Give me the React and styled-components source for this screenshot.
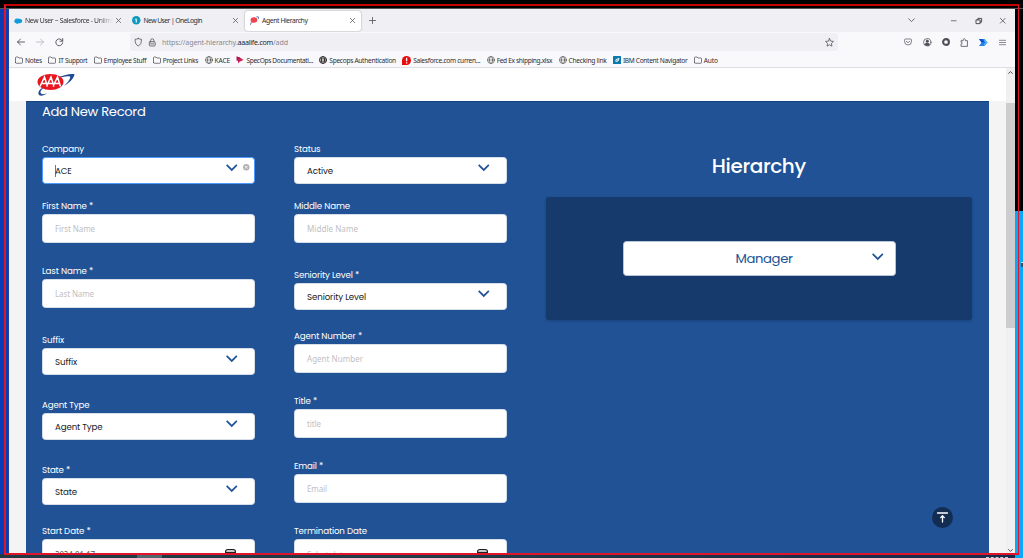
import React, { useLayoutEffect, useRef, useState } from "react";
import styled, { createGlobalStyle } from "styled-components";

const Global = createGlobalStyle`
  * { box-sizing: border-box; }
  body { margin: 0; background: #000; overflow: hidden; }
  svg { display: block; flex: none; overflow: visible; }
`;

const ui = `"Segoe UI", "Noto Sans", "Open Sans", sans-serif`;
const brand = `Poppins, Inter, "Liberation Sans", sans-serif`;

/* ---------- text that spreads its letters over a given measure ---------- */
const Measure = styled.span`
  display: block;
  flex: none;
  width: ${(p) => p.$w}px;
  white-space: pre;
`;
function Text({ w, children }) {
  const ref = useRef(null);
  const [spacing, setSpacing] = useState(0);
  useLayoutEffect(() => {
    const natural = ref.current.getBoundingClientRect().width;
    setSpacing((w - natural) / String(children).length);
  }, [w, children]);
  return (
    <Measure $w={w}>
      <span ref={ref} style={{ letterSpacing: `${spacing}px` }}>{children}</span>
    </Measure>
  );
}

/* ---------- desktop ---------- */
const Desktop = styled.div`
  position: relative;
  width: 1023px;
  height: 558px;
  overflow: hidden;
  background: #000;
  display: grid;
  grid-template-columns: 9px 1006px 8px;
  grid-template-rows: 9px 545px 4px;
`;
const TopEdge = styled.div`grid-column: 1 / -1; background: #000; border-bottom: 1px solid #555;`;
const LeftEdge = styled.div`background: #0a3db5; border-right: 1px solid #17429f;`;
const RightEdge = styled.div`
  display: flex;
  flex-direction: column;
  grid-row: 2 / 4;
  grid-column: 3;
  justify-content: flex-end;
`;
const Neighbour = styled.div`height: 347px; background: #05a8fb; display: flex; justify-content: flex-end; padding-top: 51px;`;
const PointerTip = styled.div`width: 2px; height: 5px; background: #484848; border-top: 1px solid #ddd;`;
const Taskbar = styled.div`
  grid-column: 1 / 3;
  grid-row: 3;
  display: flex;
  justify-content: space-between;
  background: linear-gradient(90deg, #213943, #203b47 45%, #1a2c49 85%);
  padding: 0 7px 0 137px;
`;
const ActiveApp = styled.div`width: 25px; background: #53656d;`;
const Clock = styled.div`width: 22px; height: 2px; margin-top: 3px; border-top: 1px dashed #cbd2da;`;
const ShareFrame = styled.div`
  position: absolute;
  left: 4px; top: 4px;
  width: 1015px; height: 551px;
  border: solid #e0152c;
  border-width: 1px 1.5px 2px 2px;
  border-top: 2px solid #c40000;
  pointer-events: none;
`;

/* ---------- browser chrome ---------- */
const Window = styled.div`
  display: flex;
  flex-direction: column;
  background: #fff;
  overflow: hidden;
  font-family: ${ui};
  font-size: 6.8px;
  color: #2c2c35;
`;
const TabBar = styled.div`
  height: 23px;
  flex: none;
  background: #f0f0f4;
  display: flex;
  align-items: center;
`;
const Tab = styled.div`
  width: ${(p) => p.$w}px;
  height: 20px;
  padding: 0 ${(p) => p.$pr}px 0 5px;
  display: flex;
  align-items: center;
  gap: 3px;
  border-radius: 3px;
  background: ${(p) => (p.$active ? "#fff" : "transparent")};
  box-shadow: ${(p) => (p.$active ? "0 0 2px #999" : "none")};
  svg:last-child { margin-left: auto; }
`;
const TabTitle = styled.div`
  ${(p) => p.$fade && "mask-image: linear-gradient(90deg, #000 82%, transparent);"}
`;
const PlusWrap = styled.div`margin-left: 8px; margin-right: auto;`;
const WindowButtons = styled.div`display: flex; align-items: center;`;
const Slot = styled.div`width: ${(p) => p.$w}px; display: flex; justify-content: center;`;
const NavBar = styled.div`
  height: 20px;
  flex: none;
  background: #f9f9fb;
  display: flex;
  align-items: center;
  padding: 0 3px 0 2.5px;
`;
const Address = styled.div`
  width: 708px;
  height: 18px;
  margin-left: 61px;
  margin-right: 61px;
  padding: 0 4px;
  border-radius: 3px;
  background: #f0f0f4;
  display: flex;
  align-items: center;
  color: #898993;
  b { font-weight: 400; color: #25252d; }
  > svg:last-child { margin-left: auto; }
`;
const Url = styled.div`display: flex; margin-left: 0.5px; font-size: 7.1px;`;
const Bookmarks = styled.div`
  height: 16px;
  flex: none;
  background: #f9f9fb;
  border-bottom: 1px solid #dfdfe3;
  display: flex;
  align-items: center;
  padding: 1px 0 0 6px;
  font-size: 6.6px;
`;
const Bookmark = styled.div`
  display: flex;
  align-items: center;
  gap: 2px;
  margin-right: 6.4px;
`;

/* ---------- page ---------- */
const Viewport = styled.div`flex: 1; min-height: 0; display: flex; background: #f4f4f4;`;
const Page = styled.div`width: 997px; display: flex; flex-direction: column;`;
const SiteHeader = styled.header`
  height: 33px;
  flex: none;
  background: #fff;
  padding: 4px 0 0 28px;
`;
const Panel = styled.main`
  flex: 1;
  min-height: 0;
  overflow: hidden;
  margin: 0 17px;
  border-top: 1px solid #164280;
  background: #205295;
  display: flex;
  gap: 37.5px;
  padding-left: 16px;
  font-family: ${brand};
  color: #fff;
`;
const FormSide = styled.form`width: 466px; flex: none;`;
const Heading = styled.h1`
  margin: 0;
  height: 39px;
  line-height: 20px;
  font-weight: 400;
  font-size: 13.1px;
`;
const Columns = styled.div`display: flex; gap: 39px;`;
const Column = styled.div`width: 213px;`;
const Field = styled.div`margin-bottom: ${(p) => p.$gap}px;`;
const Label = styled.label`display: block; height: 16px; line-height: 17px; font-size: 8.7px;`;
const Control = styled.div`
  height: ${(p) => (p.$select ? 27 : 29)}px;
  border-radius: 3.5px;
  background: #fff;
  border: 1px solid ${(p) => (p.$focus ? "#4d9aff" : "#d6deea")};
  display: flex;
  align-items: center;
  padding: ${(p) => (p.$select || p.$date ? "1px 17px 0 12px" : "0 17px 1px 12px")};
  font-size: ${(p) => (p.$select ? 8.7 : 8)}px;
  font-family: ${(p) => (p.$select ? brand : `"Noto Sans", "Open Sans", sans-serif`)};
  color: ${(p) => (p.$select ? "#222" : p.$filled ? "#555" : "#bfc0c2")};
`;
const Caret = styled.span`width: 1px; height: 12px; margin-right: -1px; background: #777;`;
const Trailing = styled.div`
  margin-left: auto;
  padding-bottom: ${(p) => p.$lift ?? 7}px;
  display: flex;
  align-items: center;
  gap: 6px;
  margin-right: ${(p) => (p.$clear ? -12.5 : 0)}px;
`;
const DateIcon = styled.div`margin-left: auto; margin-right: 1px;`;
const HierarchySide = styled.section`width: 426.5px; padding-top: 50px;`;
const Title = styled.h2`
  margin: 0 0 16px;
  height: 29px;
  line-height: 29px;
  font-size: 20px;
  font-weight: 500;
  display: flex;
  justify-content: center;
`;
const Card = styled.div`
  height: 123px;
  border-radius: 3px;
  background: #153a6b;
  box-shadow: 0 1px 3px #153a6b99;
  padding: 44px 76px 0 77.5px;
`;
const Manager = styled.div`
  height: 35px;
  border-radius: 3.5px;
  background: #fff;
  border: 1px solid #b9c5d6;
  color: #205295;
  font-size: 13.2px;
  display: flex;
  align-items: center;
  padding: 0 12px 0 111.5px;
`;
const ToTop = styled.button`
  position: absolute;
  left: 932px; top: 507px;
  width: 21px; height: 21px;
  border: 0; padding: 0;
  border-radius: 50%;
  background: #132d52;
  display: grid;
  place-items: center;
`;
const Scrollbar = styled.div`
  width: 9px;
  background: #f0f0f0;
  display: flex;
  flex-direction: column;
  align-items: center;
  justify-content: space-between;
  padding: 2px 0 1px;
`;
const Thumb = styled.div`width: 9px; height: 225px; background: #cdcdcd; margin: 28px 0 auto;`;

/* ---------- icons ---------- */
const Svg = ({ w = 8, h = w, box = "0 0 16 16", sw = 1.4, c = "#4f4f59", children }) => (
  <svg width={w} height={h} viewBox={box} fill="none" stroke={c} strokeWidth={sw} strokeLinecap="round" strokeLinejoin="round">{children}</svg>
);
const Close = ({ s = 5 }) => <Svg w={s} sw={2.3}><path d="M1 1 15 15M15 1 1 15" /></Svg>;
const Folder = () => <Svg sw={1.5}><path d="M1 13V3.500Q1 2 2.500 2H6l2 2h5.500Q15 4 15 5.500V13q0 1.500-1.500 1.500h-11Q1 14.500 1 13Z" /></Svg>;
const Globe = ({ dark }) => (
  <Svg w={8} sw={dark ? 1.7 : 1.4} c={dark ? "#222" : "#555"}><circle cx="8" cy="8" r="7" /><ellipse cx="8" cy="8" rx="3.2" ry="7" /><path d={dark ? "M1 8h14M2 4.600h12M2 11.400h12" : "M1 8h14"} strokeWidth={1.2} /></Svg>
);
const Specops = () => <Svg c="none"><path d="M1 1 8 3 15 8 8 11 4 15 4 10 1 9Z" fill="#cf2458" /><path d="M1 1 8 3 4 10Z" fill="#a31854" /></Svg>;
const Alert = () => <Svg w={9} c="none"><path d="M0 16V8a8 8 0 1 1 8 8Z" fill="#e80c0c" /><path d="M7 3h2.400v6.500H7zM7 11h2.400v2.400H7z" fill="#fff" /></Svg>;
const Ibm = () => <Svg w={8} c="none"><rect width="16" height="16" rx="1" fill="#087aae" /><path d="m4 12 1.500-5L11 4h2l-2 6-4 2Z" fill="#fff" /><path d="m5 11 5-4" stroke="#087aae" /></Svg>;
const Cloud = () => <Svg w={8} h={6} box="0 0 16 12" c="none"><path d="M4 10.500A4 4 0 0 1 1.400 4 4 4 0 0 1 7 1.600 4 4 0 0 1 12 2a4 4 0 0 1 1 8q-2 1-4 .500-2 2-5 0Z" fill="#129bdc" /></Svg>;
const OneLogin = () => <Svg w={8.5} c="none"><circle cx="8" cy="8" r="8" fill="#0c9bbe" /><path d="M6 5h3v7H7V7H6Z" fill="#fff" /></Svg>;
const AaaMark = () => <Svg w={9} c="none"><path d="M12 1.500h3v3M1 15l1.500-4" stroke="#4977b3" strokeWidth="1.600" /><ellipse cx="7" cy="7" rx="6" ry="5" fill="#f0434f" /></Svg>;
const Shield = () => <Svg w={8.5} sw={1.5}><path d="M8 1q3 1.500 6 1.500c0 7-1.500 10-6 12.500C3.500 12.500 2 9.500 2 2.500Q5 2.500 8 1Z" /></Svg>;
const Lock = () => <Svg w={8.5} sw={1.5}><rect x="2.500" y="7" width="11" height="8" rx="1.500" /><path d="M5 7V4.500a3 3 0 0 1 6 0V7M5 11h6" /></Svg>;
const Star = () => <Svg w={9}><path d="m8 1 2.100 4.500 5 .600-3.700 3.400 1 5L8 12l-4.400 2.500 1-5L.9 6.100l5-.600Z" /></Svg>;
const Arrow = ({ flip }) => <Svg w={8} c={flip ? "#b4b4bb" : "#3c3c45"} sw={1.6}><path d={flip ? "M1 8h14M9 2l6 6-6 6" : "M15 8H1M7 2 1 8l6 6"} /></Svg>;
const Reload = () => <Svg w={8.5} sw={1.7}><path d="M14 5.500A6.500 6.500 0 1 0 14.500 9M14.500 1v5H9.500" /></Svg>;
const Pocket = () => <Svg><path d="M1 4q0-2 2-2h10q2 0 2 2v3a7 7 0 0 1-14 0ZM4.500 6.500 8 9.500l3.500-3" /></Svg>;
const Account = () => <Svg w={8.5}><circle cx="8" cy="8" r="7" /><circle cx="8" cy="6" r="2.200" fill="#4f4f59" /><path d="M4 12q0-2.500 4-2.500t4 2.500-4 2-4-2Z" fill="#4f4f59" /></Svg>;
const Ring = () => <Svg sw={4.2}><circle cx="8" cy="8" r="5.800" /></Svg>;
const Puzzle = () => <Svg w={8.5} sw={1.5}><path d="M2 15v-4c3 1 3-4 0-3V5h4c-1-5 5-5 4 0h4v10Z" /></Svg>;
const Flow = () => <Svg w={9} h={7} box="0 0 18 14" c="none"><path d="M0 0h11l6 7-6 7H0l5-7Z" fill="#2583ee" /><path d="M0 0h7l5 7H5Z" fill="#0b54cf" /><path d="M11 0l6 7-6 7-1-4 3-3-3-3Z" fill="#58b4fb" /></Svg>;
const Menu = () => <Svg w={7} sw={1.5}><path d="M1 3h14M1 8h14M1 13h14" /></Svg>;
const Chevron = ({ w = 11.5, c = "#205295", sw = 1.6 }) => <Svg w={w} h={w * 0.6} box="0 0 11 6.600" c={c} sw={sw}><path d="m.600.800 4.900 4.900L10.400.800" strokeLinecap="butt" strokeLinejoin="miter" /></Svg>;
const Clear = () => <Svg w={6.5} c="none"><circle cx="8" cy="8" r="8" fill="#b3b3b3" /><path d="m5.500 5.500 5 5m0-5-5 5" stroke="#fff" strokeWidth="2" /></Svg>;
const Calendar = () => <Svg w={11} h={10} box="0 0 11 10" sw={1.2} c="#222"><rect x=".600" y=".600" width="9.800" height="8.800" rx="2" /><path d="M.600 3.300h9.800" /></Svg>;

const Logo = () => (
  <svg width="38" height="25" viewBox="0 0 38 25">
    <path d="M1.500 22C1 18.500 4 16 9 14.500 4.500 17 2.500 19.500 4 21.500c1.500 1.200 4 .500 6-.300-2.500 2.200-7.700 3.800-8.500.800ZM19 6.500C26 3 32 1.500 37.500 2c-.500 4-4 8-10.500 12 4.500-4 7-8 6-9.500-2-1-8 .200-14 2Z" fill="#1d4893" />
    <ellipse cx="13.500" cy="10" rx="13" ry="8" fill="#e8161f" />
    <path d="m3 14.500 4.500-9.500 3 9.500M5 11.500h4M9.500 14.500l4.500-9.500 3 9.500M11.500 11.500h4M16 14.500 20.500 5l3 9.500M18 11.500h4" fill="none" stroke="#fff" strokeWidth="1.500" />
  </svg>
);

const bookmarks = [
  [Folder, "Notes", 17], [Folder, "IT Support", 29], [Folder, "Employee Stuff", 42.5],
  [Folder, "Project Links", 35.5], [Globe, "KACE", 15.5], [Specops, "SpecOps Documentati...", 66.5],
  [() => <Globe dark />, "Specops Authentication", 66.5], [Alert, "Salesforce.com curren...", 67],
  [Globe, "Fed Ex shipping.xlsx", 55.5], [Globe, "Checking link", 38],
  [Ibm, "IBM Content Navigator", 64.5], [Folder, "Auto", 14],
];

const left = [
  { label: "Company", lw: 42, text: "ACE", w: 16.5, kind: "select", focus: true, gap: 14 },
  { label: "First Name *", lw: 51, text: "First Name", w: 40, gap: 20 },
  { label: "Last Name *", lw: 51, text: "Last Name", w: 39, gap: 24 },
  { label: "Suffix", lw: 22, text: "Suffix", w: 22, kind: "select", gap: 22 },
  { label: "Agent Type", lw: 47.5, text: "Agent Type", w: 47.5, kind: "select", gap: 22 },
  { label: "State *", lw: 28, text: "State", w: 22, kind: "select", gap: 18 },
  { label: "Start Date *", lw: 48.5, text: "2024-01-17", w: 40, kind: "date", filled: true, gap: 0 },
];
const right = [
  { label: "Status", lw: 26.5, text: "Active", w: 26, kind: "select", gap: 14 },
  { label: "Middle Name", lw: 56, text: "Middle Name", w: 51, gap: 24 },
  { label: "Seniority Level *", lw: 65, text: "Seniority Level", w: 59, kind: "select", gap: 18 },
  { label: "Agent Number *", lw: 68, text: "Agent Number", w: 56, gap: 20 },
  { label: "Title *", lw: 23, text: "title", w: 14, gap: 20 },
  { label: "Email *", lw: 29, text: "Email", w: 20, gap: 20 },
  { label: "Termination Date", lw: 73, text: "Select date", w: 40, kind: "date", gap: 0 },
];

function FormField({ label, lw, text, w, kind, focus, filled, gap }) {
  const select = kind === "select";
  return (
    <Field $gap={gap}>
      <Label><Text w={lw}>{label}</Text></Label>
      <Control $select={select} $date={kind === "date"} $focus={focus} $filled={filled}>
        {focus && <Caret />}
        <Text w={w}>{text}</Text>
        {select && <Trailing $clear={focus}><Chevron />{focus && <Clear />}</Trailing>}
        {kind === "date" && <DateIcon><Calendar /></DateIcon>}
      </Control>
    </Field>
  );
}

export default function App() {
  return (
    <Desktop>
      <Global />
      <TopEdge />
      <LeftEdge />
      <Window>
        <TabBar>
          <Tab $w={118} $pr={7.5}><Cloud /><TabTitle $fade><Text w={88}>New User ~ Salesforce - Unlimi</Text></TabTitle><Close /></Tab>
          <Tab $w={118} $pr={7.5}><OneLogin /><TabTitle><Text w={58.5}>New User | OneLogin</Text></TabTitle><Close /></Tab>
          <Tab $w={116} $pr={6} $active><AaaMark /><TabTitle><Text w={45.5}>Agent Hierarchy</Text></TabTitle><Close /></Tab>
          <PlusWrap><Svg w={7} sw={1.8}><path d="M8 1v14M1 8h14" /></Svg></PlusWrap>
          <WindowButtons>
            <Slot $w={60}><Chevron w={7} c="#4f4f59" sw={1.3} /></Slot>
            <Slot $w={26}><Svg w={5.5} sw={2.2}><path d="M1 8h14" /></Svg></Slot>
            <Slot $w={23}><Svg w={6} sw={2.2} c="#333"><path d="M1 5h10v10H1zM5 5V1h10v10h-4" /></Svg></Slot>
            <Slot $w={25}><Close s={5.5} /></Slot>
          </WindowButtons>
        </TabBar>
        <NavBar>
          <Slot $w={19}><Arrow /></Slot>
          <Slot $w={19}><Arrow flip /></Slot>
          <Slot $w={19}><Reload /></Slot>
          <Address>
            <Slot $w={8.5}><Shield /></Slot>
            <Slot $w={19.5}><Lock /></Slot>
            <Url><Text w={75.5}>https://agent-hierarchy.</Text><b><Text w={35.5}>aaalife.com</Text></b><Text w={15}>/add</Text></Url>
            <Star />
          </Address>
          {[Pocket, Account, Ring, Puzzle, Flow, Menu].map((Icon, i) => <Slot key={i} $w={18.9}><Icon /></Slot>)}
        </NavBar>
        <Bookmarks>
          {bookmarks.map(([Icon, name, w]) => <Bookmark key={name}><Icon /><Text w={w}>{name}</Text></Bookmark>)}
        </Bookmarks>
        <Viewport>
          <Page>
            <SiteHeader><Logo /></SiteHeader>
            <Panel>
              <FormSide>
                <Heading><Text w={103.5}>Add New Record</Text></Heading>
                <Columns>
                  <Column>{left.map((f) => <FormField key={f.label} {...f} />)}</Column>
                  <Column>{right.map((f) => <FormField key={f.label} {...f} />)}</Column>
                </Columns>
              </FormSide>
              <HierarchySide>
                <Title><Text w={94}>Hierarchy</Text></Title>
                <Card>
                  <Manager><Text w={57}>Manager</Text><Trailing $lift={4}><Chevron /></Trailing></Manager>
                </Card>
              </HierarchySide>
            </Panel>
          </Page>
          <Scrollbar>
            <Svg w={5} h={5} c="#444" sw={3}><path d="m2 11 6-6 6 6" /></Svg>
            <Thumb />
            <Svg w={5} h={5} c="#444" sw={3}><path d="m2 5 6 6 6-6" /></Svg>
          </Scrollbar>
        </Viewport>
      </Window>
      <RightEdge><Neighbour><PointerTip /></Neighbour></RightEdge>
      <Taskbar><ActiveApp /><Clock /></Taskbar>
      <ToTop aria-label="Back to top"><Svg w={11} h={11} box="0 0 11 11" c="#fff" sw={1.3}><path d="M.5 1h10M5.5 10V4M3.7 5.6 5.5 3.8l1.8 1.8" /></Svg></ToTop>
      <ShareFrame />
    </Desktop>
  );
}
